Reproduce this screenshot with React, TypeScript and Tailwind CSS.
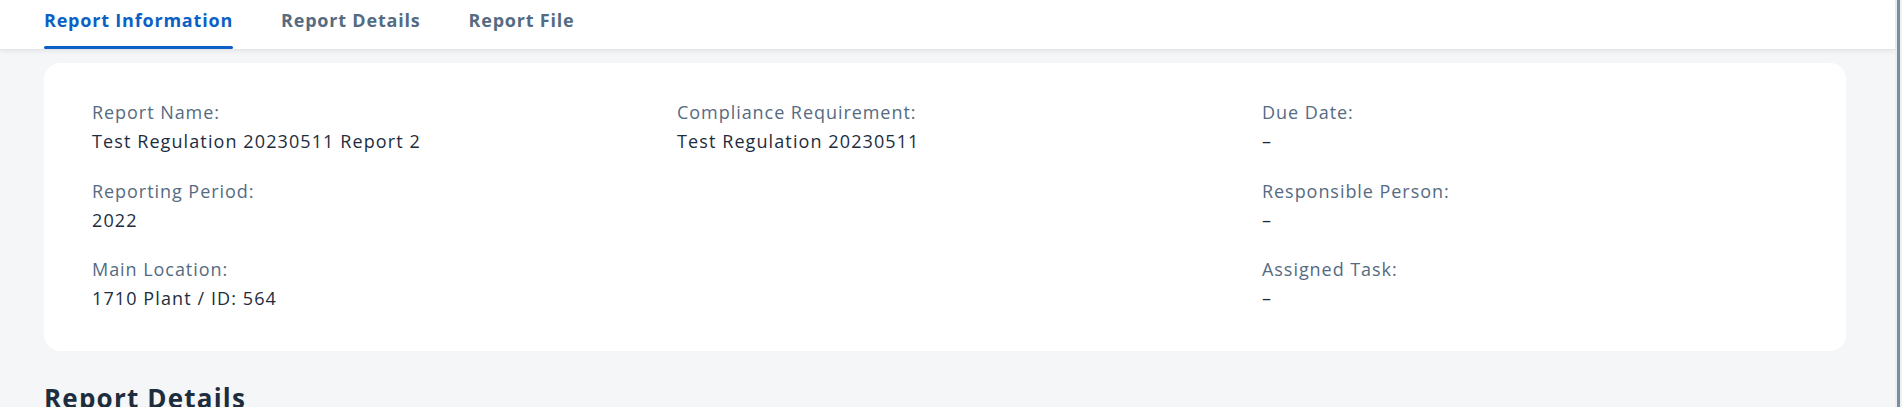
const FONT = { fontFamily: '"Open Sans", "Noto Sans", Arial, sans-serif' };

const TABS = ["Report Information", "Report Details", "Report File"];

type Field = { label: string; value: string };

const COLUMNS: Field[][] = [
  [
    { label: "Report Name:", value: "Test Regulation 20230511 Report 2" },
    { label: "Reporting Period:", value: "2022" },
    { label: "Main Location:", value: "1710 Plant / ID: 564" },
  ],
  [{ label: "Compliance Requirement:", value: "Test Regulation 20230511" }],
  [
    { label: "Due Date:", value: "–" },
    { label: "Responsible Person:", value: "–" },
    { label: "Assigned Task:", value: "–" },
  ],
];

function FieldItem({ f }: { f: Field }) {
  return (
    <div>
      <p className="text-[18px] leading-[24px] tracking-[0.95px] text-[#556b82]">{f.label}</p>
      <p className="mt-[5px] text-[18px] leading-[24px] tracking-[1.1px] text-[#1d2d3e]">{f.value}</p>
    </div>
  );
}

export default function App() {
  return (
    <div className="flex h-[407px] w-full overflow-hidden bg-[#f5f6f7]" style={FONT}>
      <div className="flex-1">
        {/* Tab bar */}
        <div className="relative z-10 flex h-[50px] gap-[40px] border-b border-[#e3e5e8] bg-white pl-[40px] shadow-[0_2px_4px_rgba(0,0,0,0.06)]">
          {TABS.map((t, i) => (
            <div key={t} className="flex h-full flex-col px-[4px]">
              <span
                className={`pt-[8px] text-[18px] font-bold leading-[24px] tracking-[0.8px] ${
                  i === 0 ? "text-[#0b5fc5]" : "text-[#556b82]"
                }`}
              >
                {t}
              </span>
              {i === 0 && <div className="mt-auto h-[3px] rounded-full bg-[#0b5fc5]" />}
            </div>
          ))}
        </div>

        <div className="pl-[44px] pr-[49px] pt-[13px]">
          {/* Report information card */}
          <div className="grid grid-cols-[585px_585px_1fr] rounded-2xl bg-white pb-[41px] pl-[48px] pt-[37px]">
            {COLUMNS.map((col, ci) => (
              <div key={ci} className="flex flex-col gap-[25.5px]">
                {col.map((f) => (
                  <FieldItem key={f.label} f={f} />
                ))}
              </div>
            ))}
          </div>

          <h2 className="mt-[31px] text-[26px] font-bold leading-[32px] tracking-[1.2px] text-[#1d2d3e]">
            Report Details
          </h2>
        </div>
      </div>

      {/* window edge / scrollbar */}
      <div className="flex">
        <div className="w-[2px] bg-[#eceef0]" />
        <div className="w-[3px] bg-[#7d8da1]" />
        <div className="w-[2px] bg-[#eef0f2]" />
      </div>
    </div>
  );
}
